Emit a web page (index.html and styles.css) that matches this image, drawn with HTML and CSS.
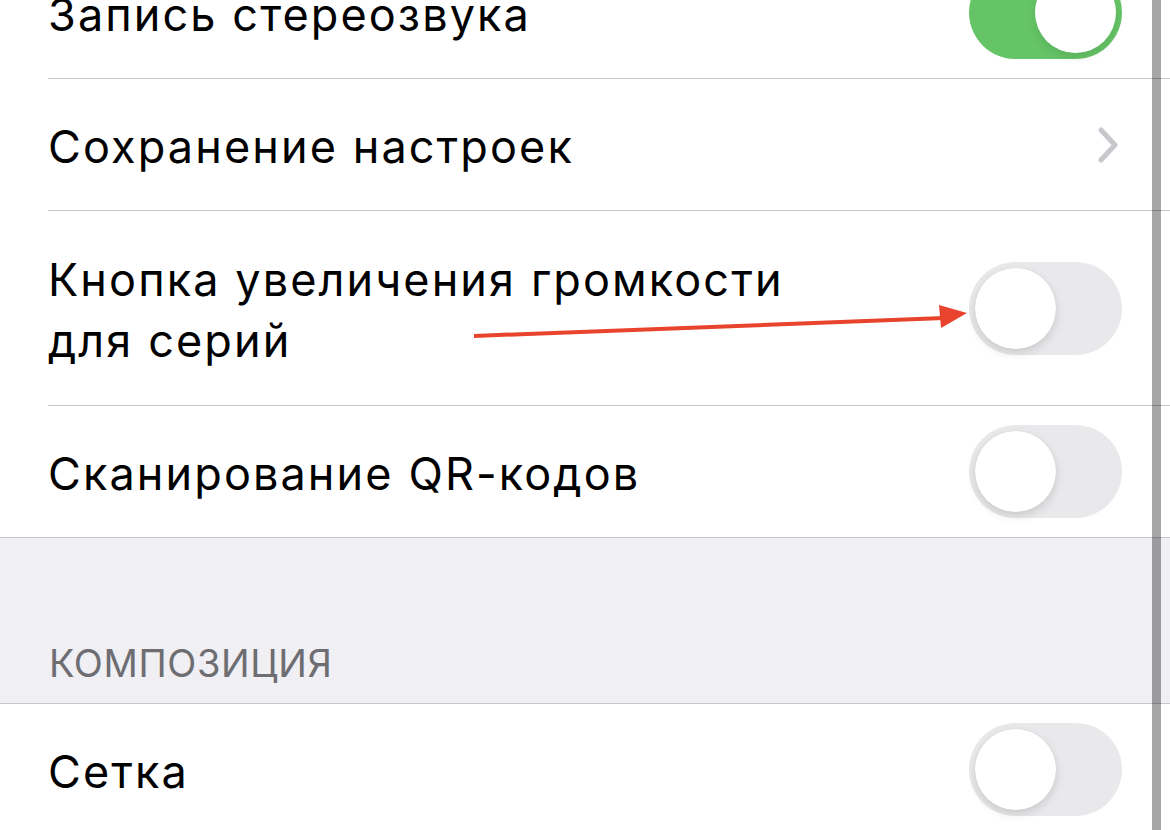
FILE: index.html
```html
<!DOCTYPE html>
<html lang="ru">
<head>
<meta charset="utf-8">
<link rel="stylesheet" href="styles.css">
</head>
<body>
<div class="screen">
  <div class="group first">
    <div class="row">
      <div class="label">Запись стереозвука</div>
      <div class="toggle on"><span class="knob"></span></div>
    </div>
    <div class="row">
      <div class="label">Сохранение настроек</div>
      <svg class="chevron" width="20" height="36" viewBox="0 0 20 36"><polyline points="3,3 17,18 3,33" fill="none" stroke="#c7c7cc" stroke-width="5" stroke-linecap="round" stroke-linejoin="round"/></svg>
    </div>
    <div class="row tall">
      <div class="label">Кнопка увеличения громкости<br>для серий</div>
      <div class="toggle"><span class="knob"></span></div>
    </div>
    <div class="row last">
      <div class="label">Сканирование QR-кодов</div>
      <div class="toggle"><span class="knob"></span></div>
    </div>
  </div>
  <div class="section-header">КОМПОЗИЦИЯ</div>
  <div class="group">
    <div class="row last">
      <div class="label">Сетка</div>
      <div class="toggle"><span class="knob"></span></div>
    </div>
  </div>
  <svg class="arrow" width="1170" height="830" viewBox="0 0 1170 830">
    <line x1="474" y1="336" x2="944" y2="318" stroke="#e8432c" stroke-width="4"/>
    <polygon points="939,305 967,313 941,328" fill="#e8432c"/>
  </svg>
  <div class="scrollbar"></div>
</div>
</body>
</html>
```
FILE: styles.css
```css
html, body {
  margin: 0;
  padding: 0;
  background: #ffffff;
}
.screen {
  position: relative;
  width: 1170px;
  height: 830px;
  overflow: hidden;
  font-family: Inter, Roboto, "Noto Sans", sans-serif;
  color: #000;
}
.group {
  background: #fff;
  padding-left: 48px;
}
.group.first {
  margin-top: -53px;
}
.row {
  display: flex;
  align-items: center;
  justify-content: space-between;
  height: 131px;
  border-bottom: 1px solid #c8c7cc;
  padding-right: 48px;
}
.row.tall {
  height: 194px;
}
.row.last {
  border-bottom: none;
}
.label {
  font-size: 45px;
  line-height: 61px;
  letter-spacing: 2.1px;
  padding-top: 4px;
}
.chevron {
  margin-right: 4px;
}
.toggle {
  position: relative;
  width: 153px;
  height: 93px;
  border-radius: 47px;
  background: #e9e9eb;
  flex: none;
}
.toggle .knob {
  position: absolute;
  top: 6px;
  left: 6px;
  width: 81px;
  height: 81px;
  border-radius: 50%;
  background: #fff;
  box-shadow: 0 4px 10px rgba(0,0,0,0.13), 0 0 1px rgba(0,0,0,0.12);
}
.toggle.on {
  background: #65c466;
}
.toggle.on .knob {
  left: auto;
  right: 6px;
  box-shadow: 0 4px 10px rgba(0,0,0,0.1);
}
.section-header {
  background: #efeff4;
  border-top: 1px solid #c8c7cc;
  border-bottom: 1px solid #c8c7cc;
  height: 144px;
  padding-bottom: 21px;
  display: flex;
  align-items: flex-end;
  padding-left: 49px;
  font-size: 38px;
  line-height: 38px;
  letter-spacing: 0.6px;
  color: #6d6d72;
}
.arrow {
  position: absolute;
  left: 0;
  top: 0;
  pointer-events: none;
}
.scrollbar {
  position: absolute;
  top: 0;
  left: 1152px;
  width: 9px;
  height: 830px;
  background: rgba(0,0,0,0.35);
}
```
